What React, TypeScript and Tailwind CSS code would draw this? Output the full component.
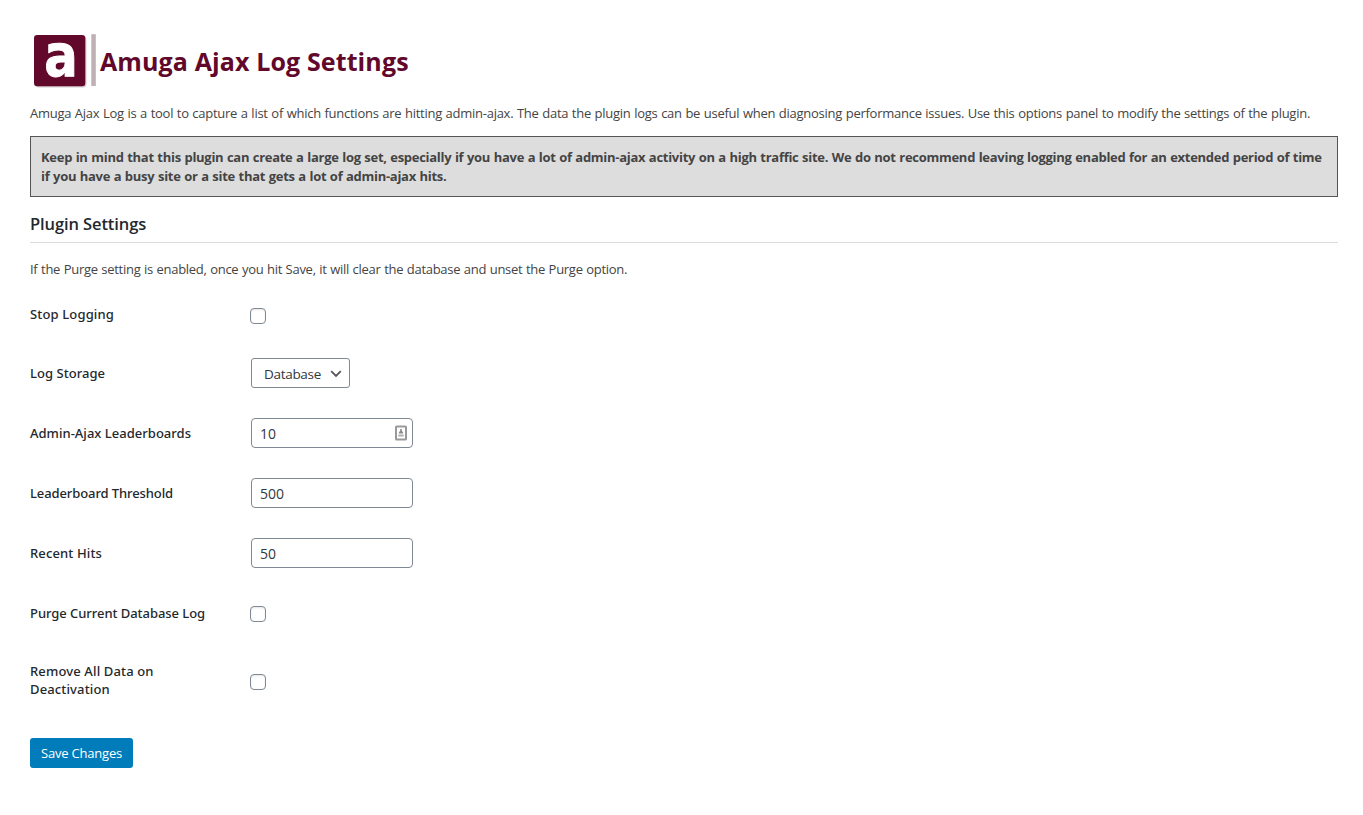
import type { ReactNode } from "react";

function Row({ label, labelClass, height, children }: { label: ReactNode; labelClass: string; height: string; children: ReactNode }) {
  return (
    <div className={`flex items-start ${height}`}>
      <div className={`w-[220px] shrink-0 font-['Noto_Sans',sans-serif] text-[13px] leading-[18px] font-medium text-[#23282d] ${labelClass}`}>
        {label}
      </div>
      {children}
    </div>
  );
}

function Check({ className }: { className: string }) {
  return (
    <input
      type="checkbox"
      className={`block size-4 appearance-none rounded-[4px] border border-[#7e8993] bg-white shadow-[inset_0_1px_2px_rgba(0,0,0,0.1)] ${className}`}
    />
  );
}

function Field({ value, icon }: { value: string; icon?: boolean }) {
  return (
    <div className="ml-px flex h-[30px] w-[162px] items-center rounded-[4px] border border-[#7e8993] bg-white pr-[5px]">
      <input
        type="text"
        defaultValue={value}
        className="h-7 min-w-0 flex-1 bg-transparent pt-px pl-2 text-[14px] text-[#32373c] outline-none"
      />
      {icon && (
        <svg width="12" height="16" viewBox="0 0 12 16" fill="none">
          <rect x="1" y="1.5" width="10" height="13" rx="0.6" stroke="#999" strokeWidth="2" />
          <circle cx="6" cy="5" r="1.1" fill="#8a8a8a" />
          <path d="M3.8 8.6C3.8 6.6 5 6 6 6s2.2.6 2.2 2.6z" fill="#8a8a8a" />
          <path d="M3.3 10.5h5.4" stroke="#b0b0b0" strokeWidth="2" />
        </svg>
      )}
    </div>
  );
}

export default function App() {
  return (
    <main className="min-h-[815px] w-[1363px] bg-white pt-[30px] pr-[25px] pl-[30px] font-['Open_Sans',sans-serif] text-[13px] text-[#444]">
      <header className="flex h-[64px] items-start">
        <svg width="70" height="62" viewBox="0 0 70 62" className="shrink-0 overflow-visible">
          <rect x="5" y="6" width="51.5" height="51.5" rx="3.5" fill="#b9aeb1" opacity="0.6" />
          <rect x="4" y="5" width="51.3" height="51.2" rx="3.2" fill="#61082b" />
          <text
            x="14.3"
            y="45.8"
            fontFamily="DejaVu Sans"
            fontWeight="700"
            fontSize="58"
            fill="#fff"
            stroke="#fff"
            strokeWidth="1"
            strokeLinejoin="round"
            textLength="33.5"
            lengthAdjust="spacingAndGlyphs"
          >
            a
          </text>
          <rect x="61.3" y="4.2" width="4.5" height="51.8" fill="#bfb0b5" />
        </svg>
        <h1 className="pt-[14px] text-[25px] leading-[34px] font-bold tracking-[0.12px] text-[#61082b]">Amuga Ajax Log Settings</h1>
      </header>
      <p className="mt-[10px] h-[32px] leading-[19px] tracking-[-0.258px] whitespace-nowrap [word-spacing:0.5px]">
        Amuga Ajax Log is a tool to capture a list of which functions are hitting admin-ajax. The data the plugin logs can be
        useful when diagnosing performance issues. Use this options panel to modify the settings of the plugin.
      </p>
      <div className="h-[61px] border border-[#555] bg-[#ddd] px-[10px] pt-[11px] leading-[19px] font-bold tracking-[-0.282px] whitespace-nowrap [word-spacing:0.5px]">
        Keep in mind that this plugin can create a large log set, especially if you have a lot of admin-ajax activity on a high
        traffic site. We do not recommend leaving logging enabled for an extended period of time
        <br />
        if you have a busy site or a site that gets a lot of admin-ajax hits.
      </div>
      <h2 className="h-[46px] border-b border-[#ddd] pt-[15px] text-[16.5px] leading-[24px] font-semibold tracking-[-0.1px] text-[#23282d]">
        Plugin Settings
      </h2>
      <p className="mt-[17px] h-[38px] leading-[19px] tracking-[-0.284px] [word-spacing:0.5px]">
        If the Purge setting is enabled, once you hit Save, it will clear the database and unset the Purge option.
      </p>
      <form>
        <Row label="Stop Logging" labelClass="pt-[7px] tracking-[0.15px]" height="h-[60px]">
          <Check className="mt-[10px]" />
        </Row>
        <Row label="Log Storage" labelClass="pt-[6px] tracking-[0.04px]" height="h-[60px]">
          <button
            type="button"
            className="ml-px flex h-[30px] w-[99px] items-center justify-between rounded-[3px] border border-[#7e8993] pt-[2px] pr-[7px] pl-[12px] text-[13.5px] tracking-[-0.3px] text-[#32373c]"
          >
            Database
            <svg width="12" height="8" viewBox="0 0 12 8" fill="none" className="-mt-px">
              <path d="M1.2 1.2 6 6l4.8-4.8" stroke="#555" strokeWidth="1.8" />
            </svg>
          </button>
        </Row>
        <Row label="Admin-Ajax Leaderboards" labelClass="pt-[6px] tracking-[0.02px]" height="h-[60px]">
          <Field value="10" icon />
        </Row>
        <Row label="Leaderboard Threshold" labelClass="pt-[6px] tracking-[-0.1px]" height="h-[60px]">
          <Field value="500" />
        </Row>
        <Row label="Recent Hits" labelClass="pt-[6px] tracking-[0.13px]" height="h-[60px]">
          <Field value="50" />
        </Row>
        <Row label="Purge Current Database Log" labelClass="pt-[6px] tracking-[-0.05px]" height="h-[60px]">
          <Check className="mt-[8px]" />
        </Row>
        <Row
          label={
            <>
              Remove All Data on
              <br />
              Deactivation
            </>
          }
          labelClass="pt-[4px] tracking-[0.14px]"
          height="h-[80px]"
        >
          <Check className="mt-[16px]" />
        </Row>
        <button type="button" className="h-[30px] w-[103px] rounded-[3px] bg-[#007cba] pt-px text-[13px] tracking-[-0.2px] whitespace-nowrap text-white">
          Save Changes
        </button>
      </form>
    </main>
  );
}
